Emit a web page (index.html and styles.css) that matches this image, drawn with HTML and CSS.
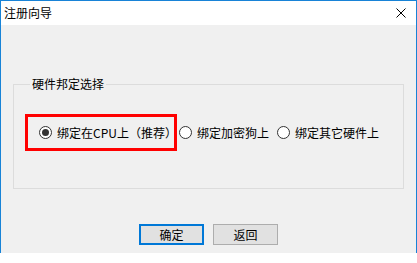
FILE: index.html
```html
<!DOCTYPE html>
<html lang="zh-CN">
<head>
  <meta charset="UTF-8" />
  <meta name="viewport" content="width=device-width, initial-scale=1.0" />
  <title>注册向导</title>
  <link rel="stylesheet" href="styles.css">
</head>
<body>
  <div class="dialog">
    <div class="titlebar">
      <span class="title">注册向导</span>
      <svg class="close" width="10" height="10" viewBox="0 0 10 10">
        <path d="M0.5 0.5 L9.5 9.5 M9.5 0.5 L0.5 9.5" stroke="#000" stroke-width="1" fill="none" />
      </svg>
    </div>

    <div class="content">
      <fieldset class="group">
        <legend>硬件邦定选择</legend>
        <div class="options">
          <label class="option highlight"><span class="radio checked"></span>绑定在CPU上（推荐）</label>
          <label class="option"><span class="radio"></span>绑定加密狗上</label>
          <label class="option"><span class="radio"></span>绑定其它硬件上</label>
        </div>
      </fieldset>

      <div class="buttons">
        <button class="btn default">确定</button>
        <button class="btn">返回</button>
      </div>
    </div>
  </div>
</body>
</html>
```

FILE: styles.css
```css
body {
  margin: 0;
  background: #fff;
  font-family: "Noto Sans CJK SC", "Liberation Sans", sans-serif;
  font-size: 12px;
  color: #000;
}

.dialog {
  width: 417px;
  height: 253px;
  box-sizing: border-box;
  border: 1px solid #1883d7;
  border-bottom: none;
  display: flex;
  flex-direction: column;
}

.titlebar {
  height: 24px;
  flex: none;
  background: #fff;
  display: flex;
  align-items: center;
  justify-content: space-between;
  padding: 0 10px 0 3px;
}

.title {
  line-height: 14px;
}

.close {
  display: block;
}

.content {
  flex: 1;
  background: #f0f0f0;
  padding-top: 52px;
}

.group {
  margin: 0 0 0 12px;
  width: 391px;
  height: 112px;
  box-sizing: border-box;
  border: 1px solid #dcdcdc;
  padding: 23px 0 0 11px;
}

.group legend {
  margin-left: 5px;
  padding: 0 2px;
  line-height: 14px;
}

.options {
  display: flex;
  align-items: center;
}

.option {
  display: flex;
  align-items: center;
  line-height: 14px;
  white-space: nowrap;
  margin-right: 8px;
}

.option.highlight {
  width: 152px;
  height: 37px;
  box-sizing: border-box;
  border: 3px solid #ff0000;
  padding-left: 11px;
  margin-right: 2px;
}

.radio {
  width: 13px;
  height: 13px;
  box-sizing: border-box;
  border: 1px solid #333;
  border-radius: 50%;
  background: #fff;
  margin-right: 5px;
  display: flex;
  align-items: center;
  justify-content: center;
  flex: none;
}

.radio.checked::after {
  content: "";
  width: 7px;
  height: 7px;
  border-radius: 50%;
  background: #333;
}

.buttons {
  display: flex;
  justify-content: center;
  gap: 9px;
  margin-top: 35px;
}

.btn {
  width: 65px;
  height: 21px;
  box-sizing: border-box;
  background: #e1e1e1;
  border: 1px solid #adadad;
  font-family: inherit;
  font-size: 12px;
  line-height: 14px;
  padding: 0;
  color: #000;
}

.btn.default {
  border: 2px solid #0078d7;
}
```
